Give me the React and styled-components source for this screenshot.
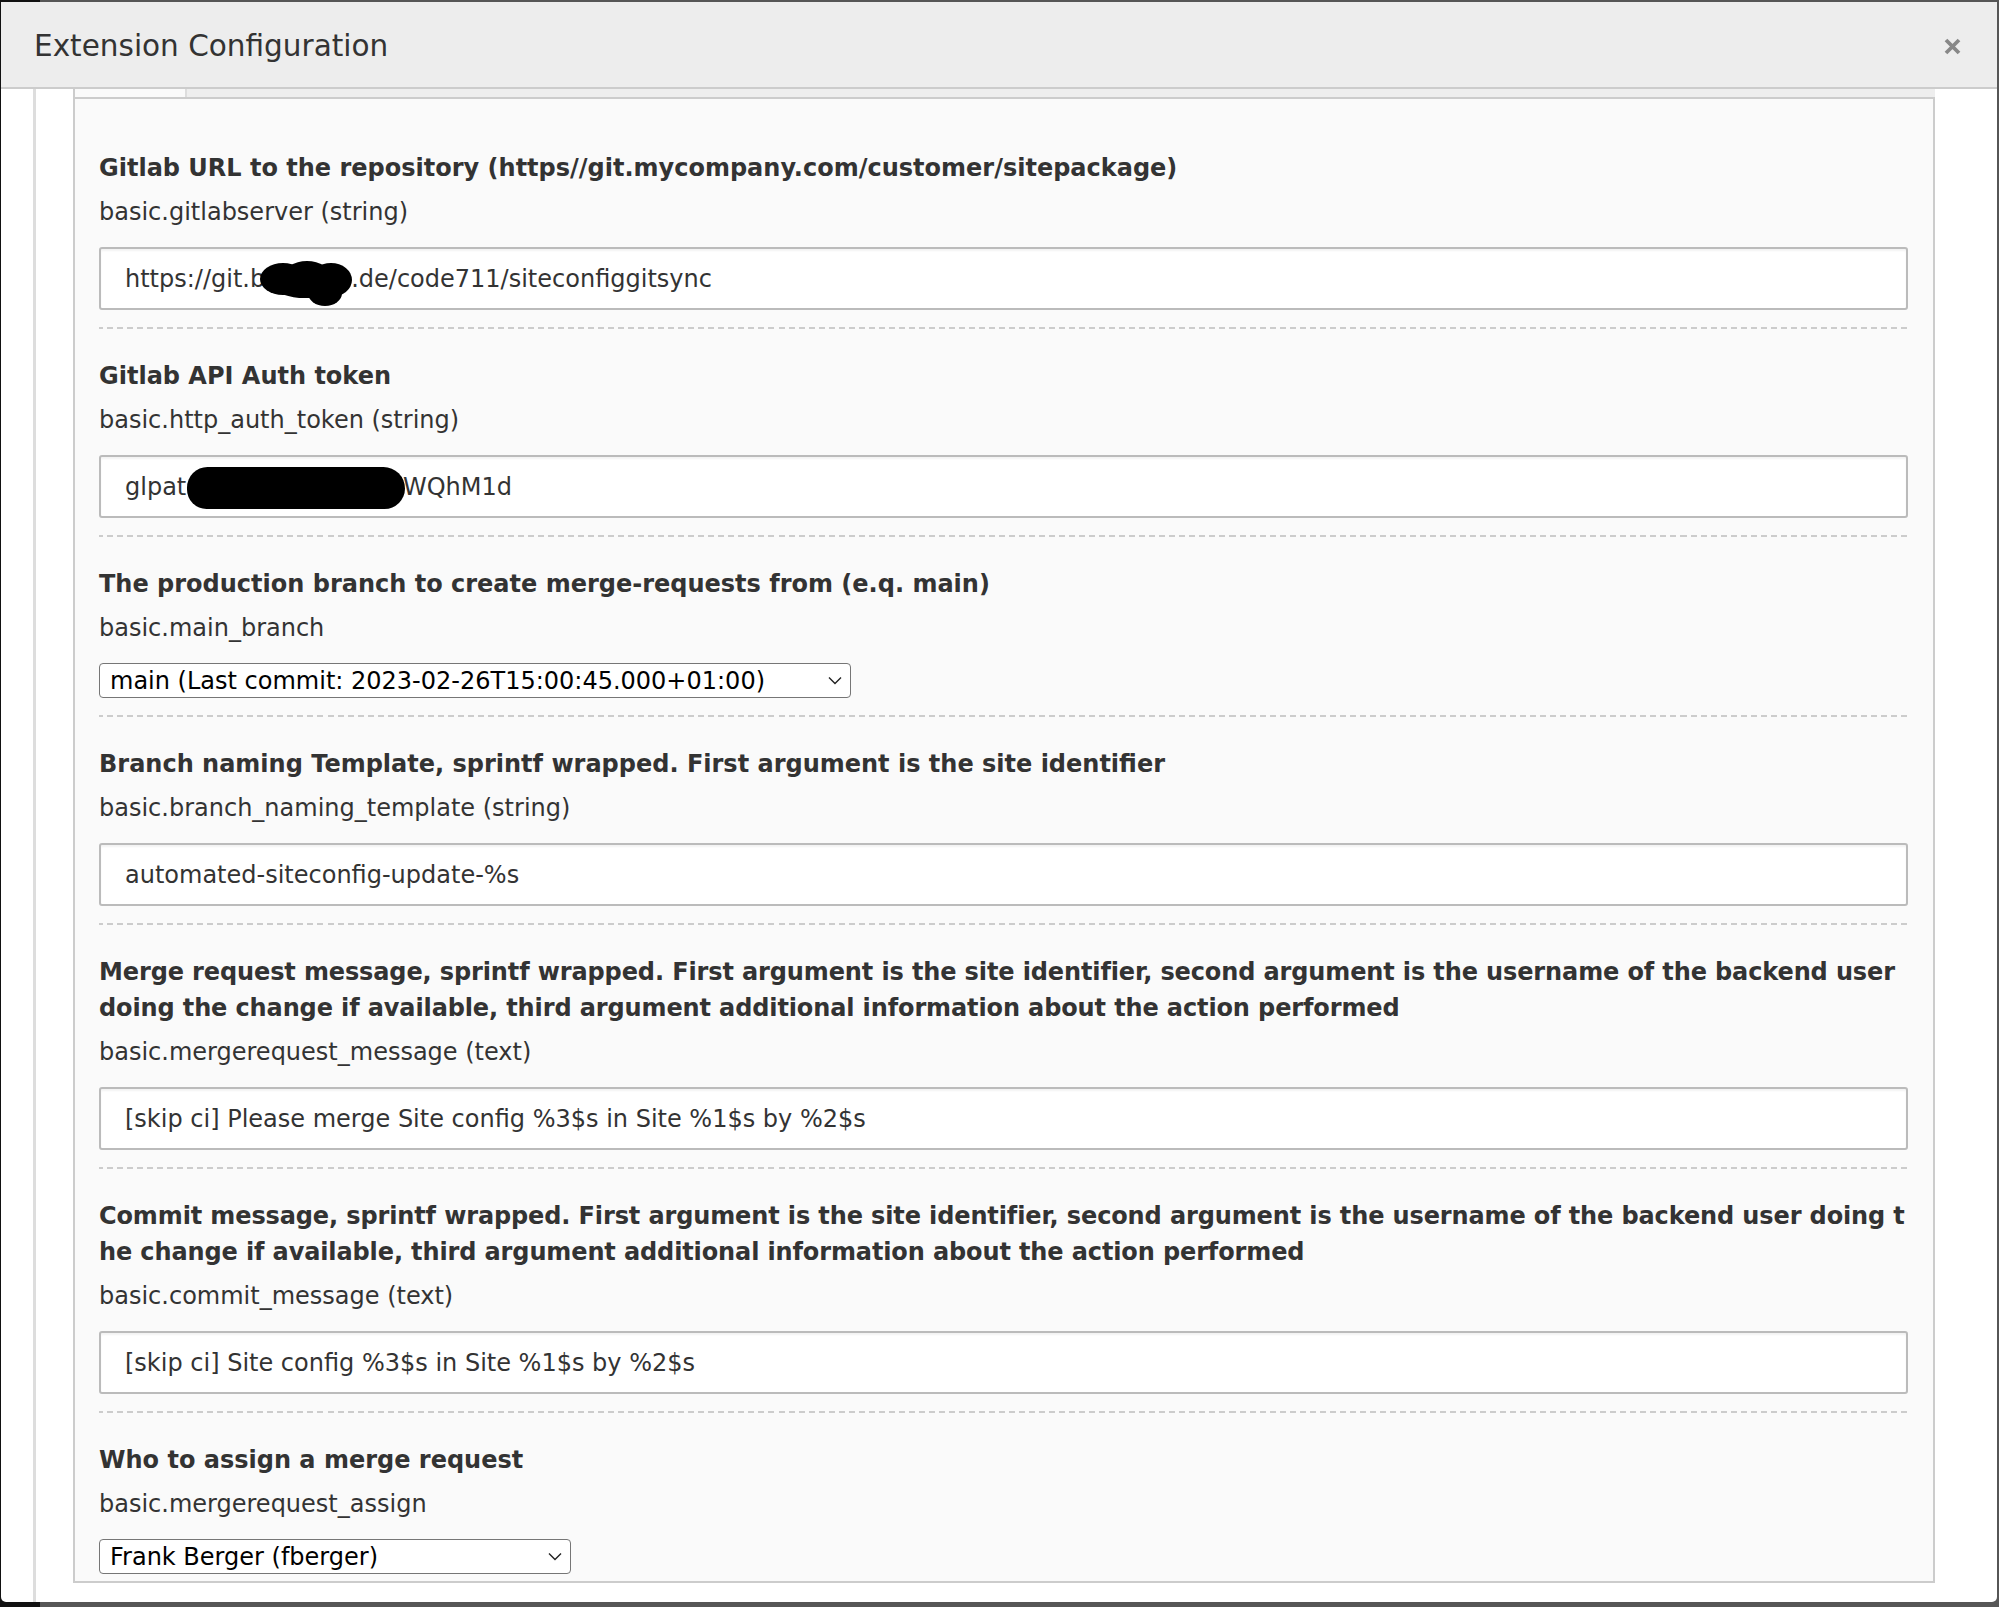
import * as React from 'react'
import styled, { createGlobalStyle } from 'styled-components'

const GlobalStyle = createGlobalStyle`
    html, body {
        margin: 0;
        padding: 0;
        height: 100%;
        overflow: hidden;
    }
    body {
        font-family: "DejaVu Sans", Verdana, sans-serif;
        color: #333;
    }
`;

const Backdrop = styled.div`
    box-sizing: border-box;
    height: 100vh;
    padding: 2px 2px 5px 1px;
    display: flex;
    background: linear-gradient(90deg, #111 0 40px, #565656 40px);
`;

const Modal = styled.div`
    flex: 1;
    display: flex;
    flex-direction: column;
    background: #fff;
    border-radius: 0 0 5px 5px;
    overflow: hidden;
`;

const Header = styled.div`
    flex: none;
    height: 85px;
    display: flex;
    align-items: center;
    justify-content: space-between;
    padding: 0 36px 0 33px;
    background: #ededed;
    border-bottom: 2px solid #ccc;
`;

const Title = styled.h1`
    margin: 0;
    font-size: 29.5px;
    font-weight: normal;
    color: #333;
    line-height: 1;
    padding-top: 5px;
`;

const CloseButton = styled.button`
    border: 0;
    padding: 4px 0 0;
    background: none;
    display: flex;
    color: #888;
    cursor: pointer;
`;

const Body = styled.div`
    flex: 1;
    min-height: 0;
    overflow: hidden;
    padding: 0 62px 0 32px;
`;

const Gutter = styled.div`
    height: 100%;
    border-left: 3px solid #ddd;
    padding-left: 37px;
`;

const TabStrip = styled.div`
    display: flex;
    height: 8px;
`;

const Tab = styled.div`
    width: ${p => p.$width || 'auto'};
    flex: ${p => (p.$grow ? 1 : 'none')};
    background: ${p => (p.$active ? '#fafafa' : '#eee')};
    border-left: ${p => (p.$active ? '2px solid #ccc' : '0')};
    border-right: ${p => (p.$active ? '2px solid #ddd' : '0')};
`;

const Panel = styled.div`
    border: 2px solid #ccc;
    background: #fafafa;
    padding: 22px 25px 7px 24px;
`;

const Field = styled.div`
    padding: 29px 0 17px;
    border-bottom: 2px solid transparent;
    border-image: repeating-linear-gradient(90deg, #ccc 0 6px, transparent 6px 10px) 2;

    &:last-child {
        border-bottom: 0;
        padding-bottom: 0;
    }
`;

const Label = styled.label`
    display: block;
    font-size: 24px;
    font-weight: bold;
    line-height: 36px;
    color: #333;
    white-space: nowrap;
    letter-spacing: ${p => (p.$tight ? '-0.12px' : 'normal')};
`;

const Key = styled.div`
    margin-top: 8px;
    font-size: 24px;
    line-height: 36px;
    color: #333;
`;

const TextBox = styled.div`
    box-sizing: border-box;
    margin-top: 17px;
    height: 63px;
    display: flex;
    align-items: center;
    padding: 0 24px;
    background: #fff;
    border: 2px solid #bbb;
    border-radius: 3px;
    box-shadow: inset 0 2px 2px rgba(0, 0, 0, 0.05);
    font-size: 24px;
    color: #333;
    white-space: pre;
`;

const Redaction = styled.span`
    display: inline-block;
    width: ${p => p.$w}px;
    height: ${p => p.$h}px;
    margin: 0 ${p => p.$mr || 0}px 0 ${p => p.$ml || 0}px;
    position: relative;
    top: ${p => p.$dy || 0}px;
    background: #000;
    border-radius: ${p => p.$radius};
    filter: blur(0.6px);
`;

const Blot = styled.svg`
    flex: none;
    margin: 0 -4px 0 -6px;
    position: relative;
    top: 4px;
    filter: blur(0.7px);
`;

const CloudBlot = () => (
    <Blot width="96" height="48" viewBox="0 0 96 48">
        <ellipse cx="24" cy="20" rx="23" ry="16" />
        <ellipse cx="48" cy="17" rx="24" ry="15" />
        <ellipse cx="72" cy="21" rx="21" ry="17" />
        <ellipse cx="46" cy="28" rx="30" ry="11" />
        <ellipse cx="66" cy="34" rx="17" ry="13" />
    </Blot>
);

const SelectBox = styled.div`
    box-sizing: border-box;
    margin-top: 17px;
    width: ${p => p.$width}px;
    height: 35px;
    display: flex;
    align-items: center;
    justify-content: space-between;
    padding: 0 8px 0 10px;
    background: #fff;
    border: 1px solid #767676;
    border-radius: 4px;
    font-size: 24px;
    color: #000;
    white-space: nowrap;
`;

const Chevron = () => (
    <svg width="14" height="9" viewBox="0 0 14 9" fill="none">
        <path d="M1 1.5 L7 7.5 L13 1.5" stroke="#222" strokeWidth="1.4" />
    </svg>
);

const CloseIcon = () => (
    <svg width="17" height="17" viewBox="0 0 17 17">
        <path d="M2 2 L15 15 M15 2 L2 15" stroke="currentColor" strokeWidth="3.8" strokeLinecap="butt" />
    </svg>
);

const fields = [
    {
        label: ['Gitlab URL to the repository (https//git.mycompany.com/customer/sitepackage)'],
        key: 'basic.gitlabserver (string)',
        value: (
            <>
                https://git.b
                <CloudBlot />
                .de/code711/siteconfiggitsync
            </>
        )
    },
    {
        label: ['Gitlab API Auth token'],
        key: 'basic.http_auth_token (string)',
        value: (
            <>
                glpat-
                <Redaction $w={218} $h={42} $ml={-8} $mr={-2} $dy={1} $radius="21px 22px 21px 20px" />
                WQhM1d
            </>
        )
    },
    {
        label: ['The production branch to create merge-requests from (e.q. main)'],
        key: 'basic.main_branch',
        select: 'main (Last commit: 2023-02-26T15:00:45.000+01:00)',
        width: 752
    },
    {
        label: ['Branch naming Template, sprintf wrapped. First argument is the site identifier'],
        key: 'basic.branch_naming_template (string)',
        value: 'automated-siteconfig-update-%s'
    },
    {
        label: [
            'Merge request message, sprintf wrapped. First argument is the site identifier, second argument is the username of the backend user',
            'doing the change if available, third argument additional information about the action performed'
        ],
        tight: true,
        key: 'basic.mergerequest_message (text)',
        value: '[skip ci] Please merge Site config %3$s in Site %1$s by %2$s'
    },
    {
        label: [
            'Commit message, sprintf wrapped. First argument is the site identifier, second argument is the username of the backend user doing t',
            'he change if available, third argument additional information about the action performed'
        ],
        tight: true,
        key: 'basic.commit_message (text)',
        value: '[skip ci] Site config %3$s in Site %1$s by %2$s'
    },
    {
        label: ['Who to assign a merge request'],
        key: 'basic.mergerequest_assign',
        select: 'Frank Berger (fberger)',
        width: 472
    }
];

const App = () => {
    return (
        <>
            <GlobalStyle />
            <Backdrop>
                <Modal>
                    <Header>
                        <Title>Extension Configuration</Title>
                        <CloseButton aria-label="Close">
                            <CloseIcon />
                        </CloseButton>
                    </Header>
                    <Body>
                        <Gutter>
                            <TabStrip>
                                <Tab $active $width="110px" />
                                <Tab $grow />
                            </TabStrip>
                            <Panel>
                                {fields.map((field, index) => (
                                    <Field key={index}>
                                        <Label $tight={field.tight}>
                                            {field.label.map((line, i) => (
                                                <React.Fragment key={i}>
                                                    {i > 0 && <br />}
                                                    {line}
                                                </React.Fragment>
                                            ))}
                                        </Label>
                                        <Key>{field.key}</Key>
                                        {field.select ? (
                                            <SelectBox $width={field.width}>
                                                <span>{field.select}</span>
                                                <Chevron />
                                            </SelectBox>
                                        ) : (
                                            <TextBox>{field.value}</TextBox>
                                        )}
                                    </Field>
                                ))}
                            </Panel>
                        </Gutter>
                    </Body>
                </Modal>
            </Backdrop>
        </>
    )
}

export default App
